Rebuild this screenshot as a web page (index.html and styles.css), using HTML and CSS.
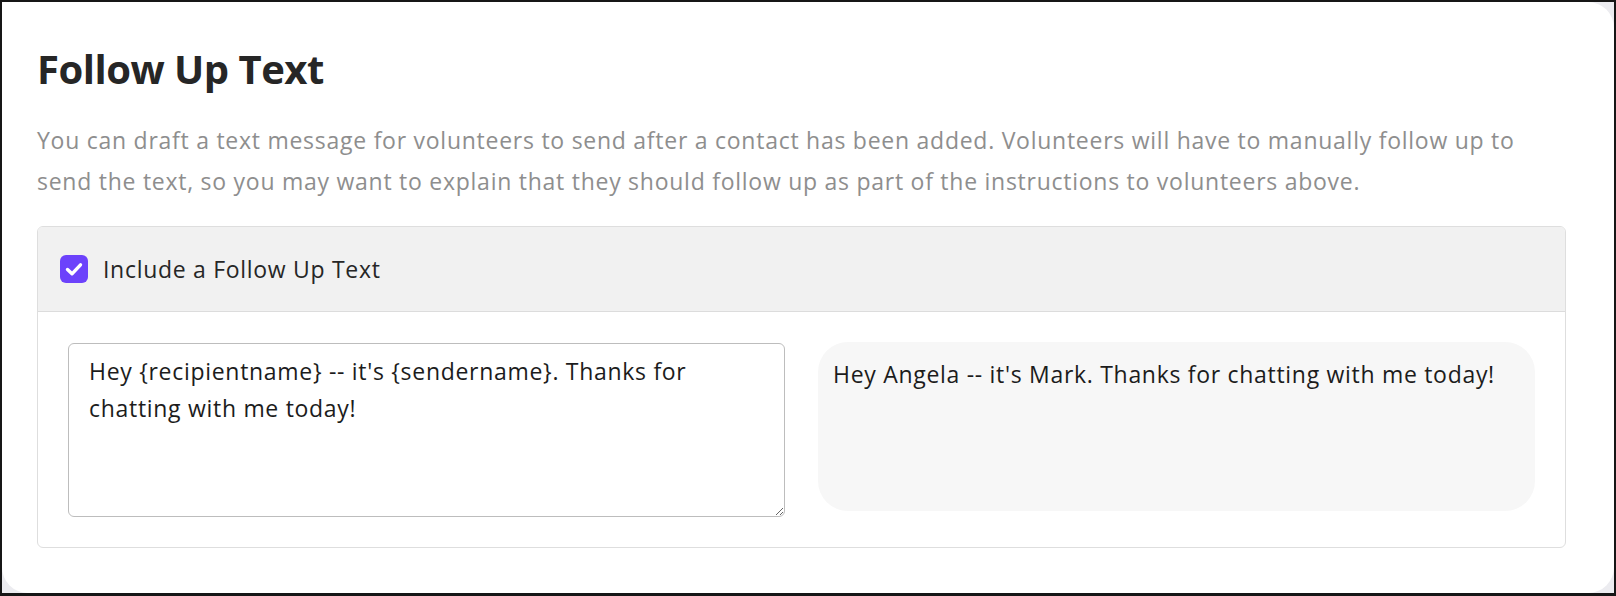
FILE: index.html
```html
<!DOCTYPE html>
<html lang="en">
<head>
<meta charset="utf-8">
<title>Follow Up Text</title>
<link rel="stylesheet" href="styles.css">
</head>
<body>
<div class="frame">
  <div class="card">
    <h1 class="title">Follow Up Text</h1>
    <p class="desc">You can draft a text message for volunteers to send after a contact has been added. Volunteers will have to manually follow up to send the text, so you may want to explain that they should follow up as part of the instructions to volunteers above.</p>
    <section class="panel">
      <label class="panel-head">
        <span class="check">
          <svg viewBox="0 0 28 28" width="28" height="28" aria-hidden="true"><polyline points="7.5,14.5 12,18.8 20.5,9.8" fill="none" stroke="#fff" stroke-width="3.4" stroke-linecap="round" stroke-linejoin="round"/></svg>
        </span>
        <span class="check-label">Include a Follow Up Text</span>
      </label>
      <div class="panel-body">
        <textarea class="editor">Hey {recipientname} -- it's {sendername}. Thanks for chatting with me today!</textarea>
        <div class="preview">Hey Angela -- it's Mark. Thanks for chatting with me today!</div>
      </div>
    </section>
  </div>
</div>
</body>
</html>
```

FILE: styles.css
```css
html, body {
  margin: 0;
  padding: 0;
}
body {
  font-family: "Open Sans", "Noto Sans", sans-serif;
  background: #111;
}
.frame {
  box-sizing: border-box;
  height: 596px;
  border: 2px solid #161616;
  border-bottom-width: 3px;
  background: #ececf0;
}
.card {
  box-sizing: border-box;
  height: 100%;
  background: #fff;
  border-radius: 0 26px 26px 26px;
  padding: 38px 48px 0 35px;
}
.title {
  margin: 0;
  font-size: 40px;
  line-height: 57px;
  font-weight: 700;
  color: #262626;
  letter-spacing: -0.5px;
}
.desc {
  margin: 23px 12px 0 0;
  font-size: 23px;
  line-height: 41px;
  color: #8e8e8e;
  letter-spacing: 0.74px;
}
.panel {
  margin-top: 24px;
  border: 1px solid #dedede;
  border-radius: 6px;
  overflow: hidden;
}
.panel-head {
  display: flex;
  align-items: center;
  gap: 15px;
  height: 84px;
  padding-left: 22px;
  background: #f1f1f1;
  border-bottom: 1px solid #dcdcdc;
}
.check {
  display: flex;
  width: 28px;
  height: 28px;
  border-radius: 6px;
  background: #6c42fb;
}
.check-label {
  font-size: 23px;
  letter-spacing: 0.7px;
  color: #262626;
}
.panel-body {
  display: grid;
  grid-template-columns: 1fr 1fr;
  gap: 33px;
  align-items: start;
  padding: 31px 30px 30px;
}
.editor {
  box-sizing: border-box;
  display: block;
  width: 100%;
  height: 174px;
  margin: 0;
  padding: 9px 20px;
  border: 1px solid #bdbdbd;
  border-radius: 6px;
  font-family: inherit;
  font-size: 23px;
  line-height: 37px;
  letter-spacing: 0.7px;
  color: #1c1c1c;
  background: #fff;
}
.preview {
  box-sizing: border-box;
  height: 169px;
  margin-top: -1px;
  padding: 12px 15px;
  border-radius: 30px;
  background: #f7f7f7;
  font-size: 23px;
  line-height: 40px;
  letter-spacing: 0.7px;
  color: #1c1c1c;
}
```
